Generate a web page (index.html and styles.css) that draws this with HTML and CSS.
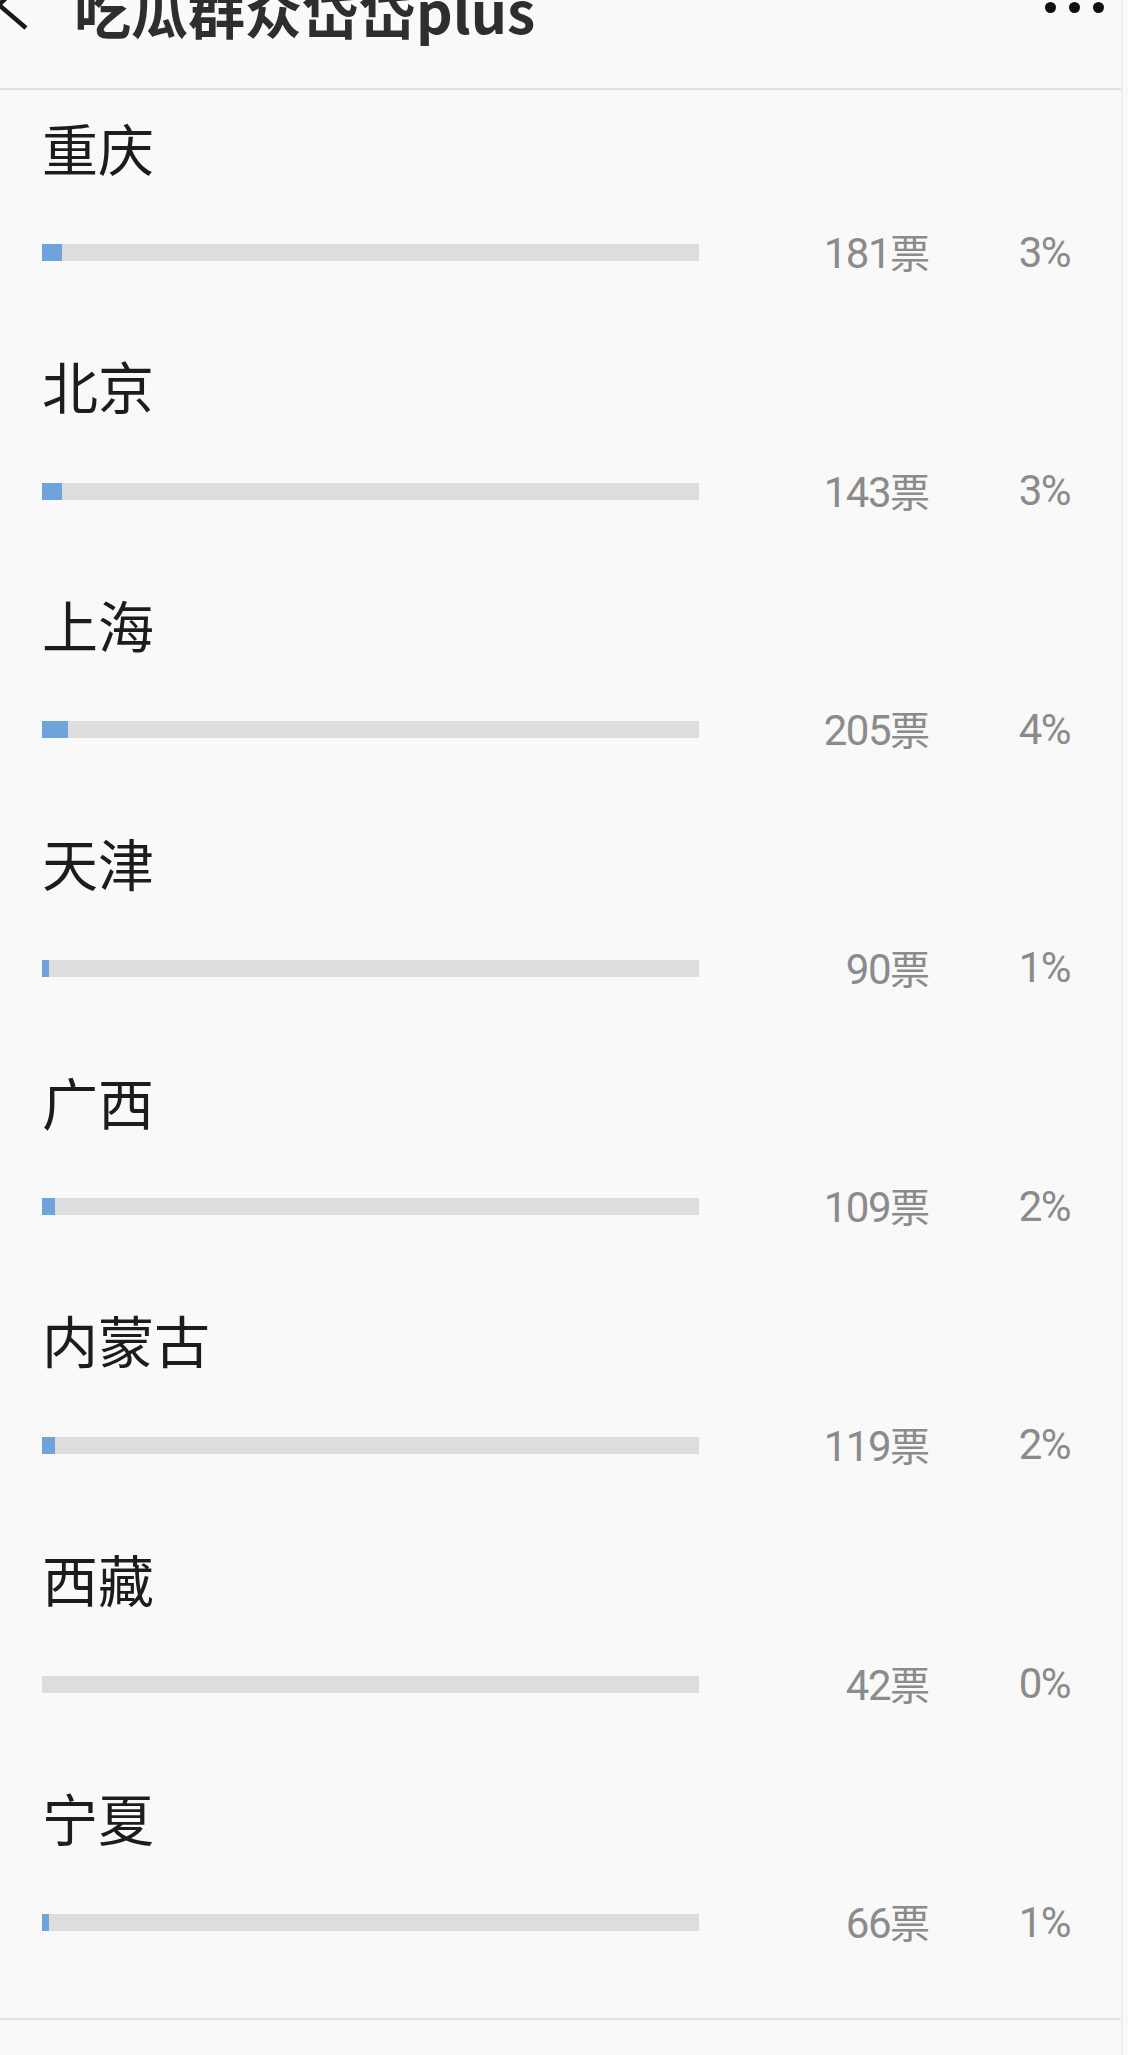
FILE: index.html
```html
<!DOCTYPE html>
<html lang="zh-CN">
<head>
    <meta charset="UTF-8">
    <meta name="viewport" content="width=device-width, initial-scale=1.0">
    <title>投票结果</title>
    <link rel="stylesheet" href="styles.css">
</head>
<body>
    <div class="page">
        <div class="topbar">
            <svg class="back" width="34" height="34" viewBox="0 0 34 34">
                <polyline points="13,-9 -1,5 26,28" fill="none" stroke="#1a1a1a" stroke-width="4.5"/>
            </svg>
            <div class="title">吃瓜群众岱岱plus</div>
            <div class="more">
                <span class="dot"></span>
                <span class="dot"></span>
                <span class="dot"></span>
            </div>
        </div>

        <div class="results">
            <div class="option">
                <div class="name">重庆</div>
                <div class="stat">
                    <div class="track"><div class="fill" style="width: 3%"></div></div>
                    <div class="votes">181<span class="unit">票</span></div>
                    <div class="percent">3%</div>
                </div>
            </div>
            <div class="option">
                <div class="name">北京</div>
                <div class="stat">
                    <div class="track"><div class="fill" style="width: 3%"></div></div>
                    <div class="votes">143<span class="unit">票</span></div>
                    <div class="percent">3%</div>
                </div>
            </div>
            <div class="option">
                <div class="name">上海</div>
                <div class="stat">
                    <div class="track"><div class="fill" style="width: 4%"></div></div>
                    <div class="votes">205<span class="unit">票</span></div>
                    <div class="percent">4%</div>
                </div>
            </div>
            <div class="option">
                <div class="name">天津</div>
                <div class="stat">
                    <div class="track"><div class="fill" style="width: 1%"></div></div>
                    <div class="votes">90<span class="unit">票</span></div>
                    <div class="percent">1%</div>
                </div>
            </div>
            <div class="option">
                <div class="name">广西</div>
                <div class="stat">
                    <div class="track"><div class="fill" style="width: 2%"></div></div>
                    <div class="votes">109<span class="unit">票</span></div>
                    <div class="percent">2%</div>
                </div>
            </div>
            <div class="option">
                <div class="name">内蒙古</div>
                <div class="stat">
                    <div class="track"><div class="fill" style="width: 2%"></div></div>
                    <div class="votes">119<span class="unit">票</span></div>
                    <div class="percent">2%</div>
                </div>
            </div>
            <div class="option">
                <div class="name">西藏</div>
                <div class="stat">
                    <div class="track"><div class="fill" style="width: 0%"></div></div>
                    <div class="votes">42<span class="unit">票</span></div>
                    <div class="percent">0%</div>
                </div>
            </div>
            <div class="option">
                <div class="name">宁夏</div>
                <div class="stat">
                    <div class="track"><div class="fill" style="width: 1%"></div></div>
                    <div class="votes">66<span class="unit">票</span></div>
                    <div class="percent">1%</div>
                </div>
            </div>
        </div>
    </div>
</body>
</html>
```

FILE: styles.css
```css
body {
    margin: 0;
    padding: 0;
    background-color: #f9f9f9;
    font-family: "Noto Sans CJK SC", "Noto Sans", sans-serif;
    overflow: hidden;
}
.page {
    width: 1121px;
    border-right: 2px solid #eeeeee;
    min-height: 2055px;
}
.topbar {
    height: 88px;
    border-bottom: 2px solid #e2e2e2;
    display: flex;
    align-items: flex-start;
    background: #fafafa;
}
.back {
    flex: none;
}
.title {
    margin-left: 40px;
    margin-top: -19px;
    font-size: 57px;
    line-height: 57px;
    font-weight: 700;
    color: #2e2e2e;
}
.more {
    margin-left: auto;
    margin-right: 17px;
    margin-top: 2px;
    display: flex;
    gap: 13px;
}
.dot {
    width: 11px;
    height: 11px;
    border-radius: 50%;
    background: #111;
}
.results {
    padding-bottom: 19px;
    border-bottom: 2px solid #e3e3e3;
}
.option {
    height: 238.6px;
    box-sizing: border-box;
    padding: 28.5px 50px 0 42px;
}
.name {
    font-size: 56px;
    line-height: 56px;
    color: #1c1c1c;
}
.stat {
    margin-top: 57px;
    height: 42px;
    display: flex;
    align-items: center;
}
.track {
    width: 657px;
    height: 17px;
    background: #dddddd;
    flex: none;
}
.fill {
    height: 100%;
    background: #70a3db;
}
.votes,
.percent {
    font-family: Roboto, "Noto Sans CJK SC", sans-serif;
    font-size: 42px;
    line-height: 42px;
    color: #8b8b8b;
    text-align: right;
    letter-spacing: -1.5px;
}
.votes {
    width: 231px;
}
.percent {
    width: 140px;
}
.unit {
    font-family: "Noto Sans CJK SC", sans-serif;
    font-size: 40px;
    letter-spacing: 0;
}
```
